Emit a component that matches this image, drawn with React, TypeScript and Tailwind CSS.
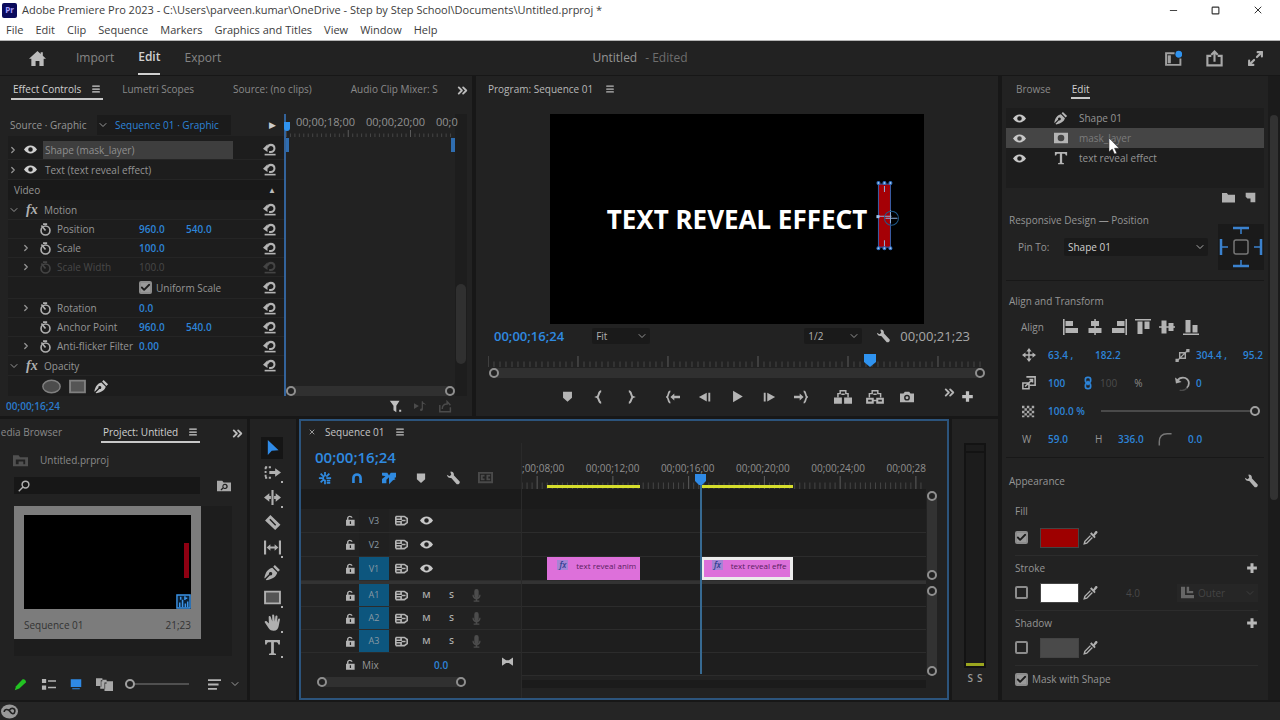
import type { ReactNode } from 'react';
import { ChevronDown, ChevronRight, ChevronsRight, Menu, Minus, Square, X, Check, Maximize2 } from 'lucide-react';

type IconName = keyof typeof icons;

const icons = {
  home: <path d="M8 1 0 8.2h2.2V15h4v-4.6h3.6V15h4V8.2H16L13 5.5V2h-2v1.7z" />,
  eye: (
    <path fillRule="evenodd" d="M0 8c2-3 4.8-4.8 8-4.8S14 5 16 8c-2 3-4.8 4.8-8 4.8S2 11 0 8zm8-2.800a2.800 2.800 0 1 0 0 5.600 2.800 2.800 0 0 0 0-5.600z" />
  ),
  reset: (
    <g>
      <path d="M0 7 5.500 1.500V11z" />
      <path d="M5 6.200C6 3.500 7.500 2.300 9.500 2.300c2.800 0 4.600 2 4.600 4.500S12 11 9.500 11H7.500" fill="none" stroke="currentColor" strokeWidth="2.500" />
      <path d="M2 13.300h13.500v2H2z" />
    </g>
  ),
  stopwatch: (
    <g fill="none" stroke="currentColor" strokeWidth="2">
      <circle cx="8" cy="9.200" r="5.500" />
      <path d="M5 1.400h5M3 3l5 6.200" />
    </g>
  ),
  pen: (
    <path fillRule="evenodd" d="M10.200 1 15 5.700l-1.800 1.700L8.700 2.700zM7.800 3.600l4.700 4.700c-1 3.600-4 5.700-10 7l-.8-.7 4-4a1.600 1.600 0 1 0-1-1l-4 4L.4 13C1.500 7.600 3.700 4.700 7.800 3.600z" />
  ),
  mask: <path fillRule="evenodd" d="M0 2h16v12H0zm8 2.200a3.800 3.800 0 1 0 0 7.600 3.800 3.800 0 0 0 0-7.600z" />,
  type: <path d="M1 1h14v4.200h-1.500c-.2-1.700-.8-2.200-2.500-2.200H9.300v9.500c0 1 .4 1.300 2 1.300V15H4.700v-1.200c1.600 0 2-.3 2-1.300V3H5c-1.700 0-2.300.5-2.500 2.200H1z" />,
  folder: <path d="M0 2.500h6l1.500 2H16V14H0z" />,
  sheet: <path d="M1 1h14v14H8V9.500H3.500L1 7z" />,
  wrench: <path d="M5.500.5c2.300 0 4 2 3.400 4.300l6.700 7.200c.8 2-1.500 4-3.300 3L6 8C3.600 8.500 1.300 6.800 1 4.300L4 6l2-1.800L5 1z" />,
  marker: <path d="M2.500 2h11v7.500L8 14.500 2.500 9.500z" />,
  braceOpen: <path d="M10.500 1.500C7 1.500 8.500 7 5.800 8c2.700 1 1.200 6.500 4.700 6.500" fill="none" stroke="currentColor" strokeWidth="2.300" />,
  braceClose: <path d="M5.500 1.500C9 1.500 7.500 7 10.200 8c-2.700 1-1.200 6.500-4.700 6.500" fill="none" stroke="currentColor" strokeWidth="2.300" />,
  goIn: (
    <g>
      <path d="M5 1.500C2 1.500 3.500 7 1 8c2.500 1 1 6.500 4 6.500" fill="none" stroke="currentColor" strokeWidth="2" />
      <path d="M5 8l4.500-4v2.600H16v2.800H9.500V12z" />
    </g>
  ),
  goOut: (
    <g>
      <path d="M11 1.500C14 1.500 12.500 7 15 8c-2.500 1-1 6.500-4 6.500" fill="none" stroke="currentColor" strokeWidth="2" />
      <path d="M11 8 6.500 4v2.600H0v2.800h6.500V12z" />
    </g>
  ),
  stepBack: <path d="M10 3v10L1 8zM11.800 3h2.200v10h-2.200z" />,
  stepForward: <path d="M6 3v10l9-5zM2 3h2.200v10H2z" />,
  play: <path d="M2.500 1v14L14.500 8z" />,
  camera: (
    <path fillRule="evenodd" d="M0 4h4l1.500-2h5L12 4h4v10H0zm8 1.500a3.300 3.300 0 1 0 0 6.600 3.300 3.300 0 0 0 0-6.600zm0 1.700a1.700 1.700 0 1 1 0 3.400 1.700 1.700 0 0 1 0-3.400z" />
  ),
  lift: (
    <g>
      <path d="M0 8.500h7V14H0zM9 8.500h7V14H9z" />
      <path d="M3.500 8.500V5h2V2.500h5V5h2v3.500M6.500 5.500h3" fill="none" stroke="currentColor" strokeWidth="1.300" />
    </g>
  ),
  extract: (
    <g fill="none" stroke="currentColor" strokeWidth="1.800">
      <path d="M1 9.500h5V13H1zM10 9.500h5V13h-5z" />
      <path d="M6 11.200h4M3 8.500V5h2.500V2.500h5V5H13v3.500M6.500 5.500h3" strokeWidth="1.300" />
    </g>
  ),
  plus: <path d="M6 1.500h4V6h4.500v4H10v4.500H6V10H1.500V6H6z" />,
  filter: <path d="M1 1h12L9 7v8l-3.500-2.500V7zM12.500 12h2.500v2.500h-2.500z" />,
  playNote: <path d="M0 4v7l6-3.500zM9.500 1.500h1.500c0 3 3.500 2 3.500 5-.8-1-1.800-1.300-3.500-1.500v6.500c0 2.500-3.500 2.800-3.500.8 0-1.300 1-1.800 2-1.800z" />,
  share: (
    <g fill="none" stroke="currentColor" strokeWidth="2">
      <path d="M5 5.500H1.300v9h13.400v-9H11M8 11V2M5 4.500 8 1.500l3 3" />
    </g>
  ),
  exportClip: <path d="M1 6v8.500h13V9M4 11c0-4 2-6 6-6V2l4 4.500" fill="none" stroke="currentColor" strokeWidth="1.800" />,
  workspace: (
    <g>
      <path d="M9 3H1v11h13.500V8" fill="none" stroke="currentColor" strokeWidth="1.800" />
      <path d="M2.500 5h3v7.500h-3z" />
      <circle cx="13" cy="4" r="3.200" fill="#2f93f0" />
    </g>
  ),
  arrow: <path d="M3 0v16l4.200-4.500L14.500 11z" />,
  trackSelect: (
    <g>
      <path d="M1 3h7M1 13h7M1.500 3v10" fill="none" stroke="currentColor" strokeWidth="1.800" strokeDasharray="2 1.500" />
      <path d="M5 6.500h5.500V4L16 8l-5.500 4V9.500H5z" />
    </g>
  ),
  ripple: <path d="M7 1h2v14H7zM0 8l5-4v2.600h1.500v2.800H5V12zM16 8l-5-4v2.600H9.500v2.800H11V12z" />,
  razor: <path fillRule="evenodd" d="M6 1 15.500 10 10.500 15 1 6zM5 5.500 10.500 11l1-1L6 4.500z" />,
  slip: <path d="M0 1.500h2v13H0zM14 1.500h2v13h-2zM2.500 8 6 5v2h4V5l3.500 3-3.500 3V9H6v2z" />,
  rectangle: <path d="M1 2.500h14v11H1z" fill="#555" stroke="currentColor" strokeWidth="1.800" />,
  ellipse: <ellipse cx="8" cy="8" rx="7.300" ry="5.300" fill="#4c4c4c" stroke="currentColor" strokeWidth="1.200" />,
  hand: (
    <path d="M4.600 9 2.500 6.800C1.300 6 .2 7 .8 8l3.800 5.600c1 1.400 2.500 2.100 4.400 2.100 3 0 4.300-1.600 4.800-4.200l1.200-6c.2-1.300-1.400-1.600-1.800-.4L12.300 8l.4-5.500c0-1.300-1.800-1.400-2-.1L10.200 7 9.600 1.400C9.400.1 7.700.2 7.700 1.500L7.800 7 6.300 2.600C5.900 1.400 4.200 1.900 4.400 3z" />
  ),
  lock: (
    <path fillRule="evenodd" d="M3 7V4.500C3 2.500 5 1 7 1s3.700 1 4 3H9C8.700 3.300 8 3 7 3S5 3.500 5 4.800V7h9v8.500H1.500V7zm4 2v4h1.800V9z" />
  ),
  sync: (
    <g fill="none" stroke="currentColor" strokeWidth="2">
      <path d="M1 3h6.500v3.500H1M1 13h6.500V9.500H1M1 3v10M8 3h3.500L15 5.500v5L11.500 13H8M8 8h5" />
    </g>
  ),
  mic: <path d="M8 0a2.700 2.700 0 0 1 2.700 2.700V8a2.700 2.700 0 0 1-5.400 0V2.700A2.700 2.700 0 0 1 8 0zM3 7h1.500c0 5 7 5 7 0H13c0 3-1.500 5-4 5.500V14h2.500v1.700h-7V14H7v-1.500C4.500 12 3 10 3 7z" />,
  nest: (
    <path d="M8 1v5M8 10v5M1 8h6M9.500 8H15M3 3l4 4M3 13l4-4M13 3 9.500 6.500M10 11h4M10 13.500h4" fill="none" stroke="currentColor" strokeWidth="2" />
  ),
  magnet: <path d="M1.500 14.500V8a6.500 6.500 0 0 1 13 0v6.500H11V8a3 3 0 0 0-6 0v6.500z" />,
  linked: <path d="M0 2h6l2 3 2-3h6v5l-2 1 1.500 1.500-3 1L8 15V7L5 10v4H0V9l4-3-4-1z" />,
  captions: (
    <g fill="none" stroke="currentColor" strokeWidth="2">
      <path d="M1 3h14v10H1zM7 6H4v4h3M13 6h-3v4h3" />
    </g>
  ),
  bowtie: <path d="M0 2l6 4h4l6-4v12l-6-4H6l-6 4z" />,
  binUp: <path fillRule="evenodd" d="M0 2.500h6l1.500 2H16V14H0zM3 7v5h3V9h5v3h2V7z" />,
  searchBin: (
    <path fillRule="evenodd" d="M0 2h6l1.500 2H16v10H0zM9 5.500a3 3 0 0 0-2.600 4.300L4 12l1 1 2.400-2.200A3 3 0 1 0 9 5.500zm0 1.300a1.700 1.700 0 1 1 0 3.400 1.700 1.700 0 0 1 0-3.400z" />
  ),
  search: (
    <g fill="none" stroke="currentColor" strokeWidth="2">
      <circle cx="10" cy="6" r="4.500" />
      <path d="M7 9l-6 6" />
    </g>
  ),
  pencil: <path d="M1 15l1.500-5L10 2c1.800-1.500 5.500 1 4.500 3.500L6.500 13z" />,
  listView: <path d="M1 2h4.500v4.500H1zM1 9h4.500v4.500H1zM7.500 3.500H16V5H7.500zM7.500 10.500H16V12H7.500z" />,
  iconView: <path d="M1 1.500h14v10.500H1zM3 13.500h10V15H3z" />,
  freeform: (
    <path fillRule="evenodd" d="M0 2h6v1.500h4V5h6v9H8v-2H4V9.500H0zM4.500 4v6H5V5h1V4zM8 6v6h.6V7H10V6z" />
  ),
  sort: <path d="M0 1.500h16v2.200H0zM0 6.900h13v2.200H0zM0 12.300h11v2.200H0z" />,
  alignLeft: <path d="M0 0h1.600v16H0zM2.500 2H10v5H2.500zM2.500 9H15v5H2.500z" />,
  alignCenter: <path d="M7.300 0h1.500v16H7.300zM4 2h8v5H4zM1.500 9h13v5h-13z" />,
  alignRight: <path d="M14.400 0H16v16h-1.600zM6 2h7.500v5H6zM1 9h12.500v5H1z" />,
  alignTop: <path d="M0 0h16v1.600H0zM2.500 2.500h5V15h-5zM9.500 2.500h5V10h-5z" />,
  alignMiddle: <path d="M0 7.300h16v1.500H0zM2.500 1.500h5v13h-5zM9.500 4h5v8h-5z" />,
  alignBottom: <path d="M0 14.400h16V16H0zM2.500 1h5v12.500h-5zM9.500 6h5v7.500h-5z" />,
  position: (
    <g>
      <path d="M7.200 3h1.600v10H7.200zM3 7.200h10v1.600H3z" />
      <path d="M8 0l3 4H5zM8 16l3-4H5zM0 8l4-3v6zM16 8l-4-3v6z" />
    </g>
  ),
  anchor: (
    <g>
      <path d="M2 14 14 2M5 5h6v6H5z" fill="none" stroke="currentColor" strokeWidth="1.500" />
      <path d="M12 1h3.500v3.500H12zM.5 11.500H4V15H.5z" />
    </g>
  ),
  scale: (
    <g fill="none" stroke="currentColor" strokeWidth="1.800">
      <path d="M5 1h10v9.500H9M1 8h7v6.500H1zM3.500 12 12 4M8.500 4H12v3.500" />
    </g>
  ),
  link: (
    <g fill="none" stroke="currentColor" strokeWidth="2">
      <rect x="5" y="1.500" width="6" height="6" rx="2.500" />
      <rect x="5" y="8.500" width="6" height="6" rx="2.500" />
      <path d="M8 5.500v5" />
    </g>
  ),
  rotate: (
    <g>
      <path d="M2.500 5C4 2.500 6 1.800 8.500 1.800c4 0 6.300 3 6.300 6 0 2-1 4-2.500 5" fill="none" stroke="currentColor" strokeWidth="1.900" />
      <path d="M5 15c3 1 6 0 8-2.500" fill="none" stroke="#4a4a4a" strokeWidth="1.500" />
      <path d="M0 1.500 1 8l6-1.500z" />
    </g>
  ),
  opacity: (
    <path d="M0 1h3v3H0zM6 1h3v3H6zM12 1h3v3h-3zM3 4h3v3H3zM9 4h3v3H9zM0 7h3v3H0zM6 7h3v3H6zM12 7h3v3h-3zM3 10h3v3H3zM9 10h3v3H9zM0 13h3v2H0zM6 13h3v2H6zM12 13h3v2h-3z" />
  ),
  corner: <path d="M1.500 15.500V11c0-6 3-9 9-9h5" fill="none" stroke="currentColor" strokeWidth="1.700" />,
  dropper: (
    <g>
      <path d="M9 2.500 11 4.500 13 1.500c1.500-1.500 3.500.5 2 2L12.500 6l1 1.500-1.300 1.300L7.500 4z" />
      <path d="M8 6 2 12l-.7 2.700L4 14l6-6" fill="none" stroke="currentColor" strokeWidth="1.500" />
    </g>
  ),
  strokeEdge: <path d="M0 1h5v10h11v4H0zM7 1h3v5h5v3H7z" />,
  cloud: (
    <g>
      <ellipse cx="8" cy="8" rx="8" ry="6.500" />
      <path d="M3 8.500c0-3 4-3 5.500-.5s4 3 4.500 0-3-4-5-1.500" fill="none" stroke="#222" strokeWidth="1.500" />
    </g>
  ),
  sequence: (
    <g>
      <path d="M1 1h14v14H1z" fill="#0b2238" stroke="#3b94e8" strokeWidth="1.500" />
      <path d="M4 14V9M7 14V6M10 14v-4M12.500 14V8M5 3v3M9.500 2.500v4M12 4.500H9" fill="none" stroke="#3b94e8" strokeWidth="1.600" />
    </g>
  ),
};

function Icon({ name, className = 'size-3 text-[#b8b8b8]' }: { name: IconName; className?: string }) {
  return (
    <svg viewBox="0 0 16 16" fill="currentColor" aria-hidden="true" className={`shrink-0 ${className}`}>
      {icons[name]}
    </svg>
  );
}

function IconButton({ name, label, className = '', iconClass }: { name: IconName; label: string; className?: string; iconClass?: string }) {
  return (
    <button type="button" aria-label={label} className={`flex items-center justify-center ${className}`}>
      <Icon name={name} className={iconClass} />
    </button>
  );
}

function CheckBox({ id, checked = false, label }: { id: string; checked?: boolean; label?: string }) {
  return (
    <span className="relative flex size-[13px] shrink-0 items-center justify-center">
      <input
        id={id}
        type="checkbox"
        defaultChecked={checked}
        aria-label={label}
        className="peer size-full appearance-none rounded-xs border-2 border-[#8c8c8c] checked:bg-[#9a9a9a]"
      />
      <Check className="pointer-events-none absolute hidden size-[11px] text-[#1c1c1c] peer-checked:block" strokeWidth={4} />
    </span>
  );
}

function Dropdown({ id, value, label, className }: { id: string; value: string; label?: string; className: string }) {
  return (
    <span className={`relative flex items-center rounded-xs bg-[#1a1a1a] ${className}`}>
      <select id={id} aria-label={label} defaultValue={value} className="size-full appearance-none bg-transparent pl-1 outline-none">
        <option>{value}</option>
      </select>
      <ChevronDown className="pointer-events-none absolute right-0.5 size-3 opacity-80" />
    </span>
  );
}

function Ring() {
  return <span className="size-[10px] shrink-0 rounded-full border-2 border-[#8f8f8f] bg-[#222]" />;
}

/* Horizontal zoom bar with a round handle at each end */
function ZoomBar({ className = '' }: { className?: string }) {
  return (
    <div className={`flex items-center justify-between rounded-full bg-[#303030] ${className}`}>
      <Ring />
      <Ring />
    </div>
  );
}

function Ticks({ count, every, offset = 0, className }: { count: number; every: number; offset?: number; className: string }) {
  const marks = Array.from({ length: count }, (_, i) => i);
  return (
    <svg className={className} aria-hidden="true">
      {marks.map((i) => {
        const x = `${((i / count) * 100).toFixed(2)}%`;
        const major = (i - offset) % every === 0;
        return <line key={i} x1={x} x2={x} y1={major ? '0' : '50%'} y2="100%" stroke={major ? '#5c5c5c' : '#454545'} strokeWidth="1" />;
      })}
    </svg>
  );
}

function Tab({ children, active = false, className = '' }: { children: ReactNode; active?: boolean; className?: string }) {
  return (
    <button
      type="button"
      className={`flex items-center whitespace-nowrap border-b-2 pt-1 ${active ? 'border-[#c8c8c8] font-medium text-[#d0d0d0]' : 'border-transparent text-[#8a8a8a]'} ${className}`}
    >
      {children}
    </button>
  );
}

const menuItems = ['File', 'Edit', 'Clip', 'Sequence', 'Markers', 'Graphics and Titles', 'View', 'Window', 'Help'];

function TitleBar() {
  return (
    <header className="border-b border-[#b5b5b5] bg-white text-[11px] text-[#3c3c3c]">
      <div className="flex h-5 items-center pl-0.5">
        <span className="flex size-[15px] items-center justify-center rounded-xs bg-[#0b0b5c] text-[8px] font-bold text-[#a9a3ff]">Pr</span>
        <h1 className="pl-[5px]">Adobe Premiere Pro 2023 - C:\Users\parveen.kumar\OneDrive - Step by Step School\Documents\Untitled.prproj *</h1>
        <div className="ml-auto flex items-center gap-8 pr-4 text-[#333]">
          <button type="button" aria-label="Minimize"><Minus className="size-[11px]" /></button>
          <button type="button" aria-label="Restore"><Square className="size-[9px]" strokeWidth={3} /></button>
          <button type="button" aria-label="Close"><X className="size-[12px]" /></button>
        </div>
      </div>
      <nav className="flex h-5 items-center gap-3 pl-1.5">
        {menuItems.map((item) => (
          <button key={item} type="button">{item}</button>
        ))}
      </nav>
    </header>
  );
}

function WorkspaceBar() {
  return (
    <div className="grid h-[34px] grid-cols-[1fr_auto_1fr] items-stretch bg-[#222] text-[12px] text-[#858585]">
      <div className="flex items-stretch pl-[29px]">
        <IconButton name="home" label="Home" iconClass="size-[17px] text-[#bcbcbc]" />
        <button type="button" className="ml-[30px]">Import</button>
        <button type="button" className="ml-6 border-b-2 border-[#cfcfcf] font-semibold text-[#d0d0d0]">Edit</button>
        <button type="button" className="ml-6">Export</button>
      </div>
      <p className="flex items-center gap-2">
        <span className="text-[#969696]">Untitled</span>
        <span className="text-[#6e6e6e]">- Edited</span>
      </p>
      <div className="flex items-center justify-end gap-6 pr-4">
        <IconButton name="workspace" label="Workspaces" iconClass="size-[17px] text-[#a0a0a0]" />
        <IconButton name="share" label="Quick export" iconClass="size-[17px] text-[#a8a8a8]" />
        <button type="button" aria-label="Full screen"><Maximize2 className="size-[17px] text-[#b0b0b0]" strokeWidth={3} /></button>
      </div>
    </div>
  );
}

interface Property {
  name: string;
  values: string[];
  expandable?: boolean;
  disabled?: boolean;
}

const motionBefore: Property[] = [
  { name: 'Position', values: ['960.0', '540.0'] },
  { name: 'Scale', values: ['100.0'], expandable: true },
  { name: 'Scale Width', values: ['100.0'], expandable: true, disabled: true },
];

const motionAfter: Property[] = [
  { name: 'Rotation', values: ['0.0'], expandable: true },
  { name: 'Anchor Point', values: ['960.0', '540.0'] },
  { name: 'Anti-flicker Filter', values: ['0.00'], expandable: true },
];

function ResetButton({ dim = false }: { dim?: boolean }) {
  return <IconButton name="reset" label="Reset" className="ml-auto" iconClass={dim ? 'size-[13px] text-[#444]' : 'size-[13px] text-[#b4b4b4]'} />;
}

function PropertyRow({ property }: { property: Property }) {
  const { name, values, expandable, disabled } = property;
  return (
    <div className="flex h-[19px] items-center border-b border-[#252525] pr-2">
      <span className="flex w-[31px] justify-end pr-2">{expandable && <ChevronRight className="size-[10px]" strokeWidth={3} />}</span>
      <Icon name="stopwatch" className={disabled ? 'size-[13px] text-[#444]' : 'size-[13px] text-[#b0b0b0]'} />
      <span className={`w-[87px] whitespace-nowrap pl-[5px] ${disabled ? 'text-[#484848]' : ''}`}>{name}</span>
      {values.map((value, i) => (
        <button key={i} type="button" className={`w-[47px] text-left ${disabled ? 'text-[#484848]' : 'font-semibold text-[#2d84d8]'}`}>
          {value}
        </button>
      ))}
      <ResetButton dim={disabled} />
    </div>
  );
}

function EffectControls() {
  return (
    <section className="flex min-w-0 flex-[464] flex-col bg-[#222] pl-2" aria-label="Effect Controls">
      <div className="mb-0.5 flex h-6 items-stretch">
        <Tab active className="ml-[3px] px-0.5">
          Effect Controls <Menu className="ml-2.5 size-[10px]" strokeWidth={3} />
        </Tab>
        <Tab className="ml-[19px]">Lumetri Scopes</Tab>
        <Tab className="ml-[39px]">Source: (no clips)</Tab>
        <Tab className="ml-[39px]">Audio Clip Mixer: S</Tab>
        <button type="button" aria-label="More panels" className="ml-auto pr-0.5 pt-1"><ChevronsRight className="size-[15px] text-[#bbb]" strokeWidth={3} /></button>
      </div>
      <div className="flex flex-1 pt-3">
        <div className="flex w-[276px] shrink-0 flex-col">
          <div className="flex h-[22px] items-center pl-0.5">
            <span className="w-[87px]">Source · Graphic</span>
            <button type="button" className="flex h-5 w-[134px] items-center gap-1.5 bg-[#1b1b1b] text-[#2d84d8]">
              <ChevronDown className="size-3 shrink-0 text-[#999]" />
              <span className="whitespace-nowrap">Sequence 01 · Graphic</span>
            </button>
            <span className="ml-auto pr-2 text-[9px] text-[#ccc]">▶</span>
          </div>
          <div className="flex-1 bg-[#1d1d1d] pt-1">
            <div className="flex h-5 items-center border-b border-[#252525] pr-2">
              <ChevronRight className="size-[10px]" strokeWidth={3} />
              <IconButton name="eye" label="Toggle shape" className="mx-1.5" iconClass="size-[13px] text-[#d0d0d0]" />
              <span className="flex h-[18px] w-[190px] items-center bg-[#3e3e3e] pl-0.5 text-[#8f8f8f]">Shape (mask_layer)</span>
              <ResetButton />
            </div>
            <div className="flex h-5 items-center border-b border-[#252525] pr-2">
              <ChevronRight className="size-[10px]" strokeWidth={3} />
              <IconButton name="eye" label="Toggle text" className="mx-1.5" iconClass="size-[13px] text-[#d0d0d0]" />
              <span className="pl-0.5">Text (text reveal effect)</span>
              <ResetButton />
            </div>
            <div className="flex h-5 items-center justify-between bg-[#191919] pl-1.5 pr-2">
              <span>Video</span>
              <span className="text-[8px] text-[#bbb]">▲</span>
            </div>
            <div className="flex h-5 items-center border-b border-[#252525] pr-2">
              <ChevronDown className="size-3" strokeWidth={2} />
              <span className="w-6 pl-1.5 font-['Liberation_Serif',serif] text-[14px] font-bold italic text-[#b0b0b0]">fx</span>
              <span>Motion</span>
              <ResetButton />
            </div>
            {motionBefore.map((property) => <PropertyRow key={property.name} property={property} />)}
            <div className="flex h-[22px] items-center border-b border-[#252525] pl-[131px] pr-2">
              <CheckBox id="uniform-scale" checked />
              <label htmlFor="uniform-scale" className="pl-1">Uniform Scale</label>
              <ResetButton />
            </div>
            {motionAfter.map((property) => <PropertyRow key={property.name} property={property} />)}
            <div className="flex h-5 items-center border-b border-[#252525] pr-2">
              <ChevronDown className="size-3" strokeWidth={2} />
              <span className="w-6 pl-1.5 font-['Liberation_Serif',serif] text-[14px] font-bold italic text-[#b0b0b0]">fx</span>
              <span>Opacity</span>
              <ResetButton />
            </div>
            <div className="flex h-5 items-center gap-2 pl-[34px]">
              <IconButton name="ellipse" label="Ellipse mask" iconClass="size-[19px] text-[#808080]" />
              <IconButton name="rectangle" label="Rectangle mask" iconClass="size-[17px] text-[#808080]" />
              <IconButton name="pen" label="Pen mask" iconClass="size-[15px] text-[#c4c4c4]" />
            </div>
          </div>
        </div>
        <div className="relative flex min-w-0 flex-1 flex-col border-l-2 border-[#33639b]">
          <span className="absolute -left-0.5 top-2 h-[9px] w-[6px] rounded-b-sm bg-[#2f93f0]" />
          <div className="flex h-4 items-center gap-[11px] whitespace-nowrap pl-2.5 text-[11px] text-[#929292]">
            <span>00;00;18;00</span>
            <span>00;00;20;00</span>
            <span>00;0</span>
          </div>
          <Ticks count={38} every={14} className="h-[7px] w-full" />
          <div className="flex justify-between pt-px">
            <span className="h-[14px] w-[3px] bg-[#2f6db0]" />
            <span className="h-[14px] w-[4px] bg-[#2f6db0]" />
          </div>
          <ZoomBar className="mt-auto h-[10px]" />
        </div>
        <div className="mr-[5px] flex w-3 flex-col justify-end bg-[#1d1d1d] pb-8">
          <span className="h-20 w-[10px] self-center rounded-full bg-[#303030]" />
        </div>
      </div>
      <div className="flex h-[20px] items-center text-[#aaa]">
        <span className="-ml-0.5 font-semibold text-[#2b7bcc]">00;00;16;24</span>
        <div className="ml-auto flex items-center gap-3 pr-5">
          <IconButton name="filter" label="Filter properties" iconClass="size-[13px] text-[#c0c0c0]" />
          <IconButton name="playNote" label="Play audio" iconClass="size-[13px] text-[#4b4b4b]" />
          <IconButton name="exportClip" label="Loop playback" iconClass="size-[13px] text-[#4b4b4b]" />
        </div>
      </div>
    </section>
  );
}

const transportGroups: { name: IconName; label: string; size: string }[][] = [
  [
    { name: 'marker', label: 'Add marker', size: 'size-[13px]' },
    { name: 'braceOpen', label: 'Mark in', size: 'size-[14px]' },
    { name: 'braceClose', label: 'Mark out', size: 'size-[14px]' },
  ],
  [
    { name: 'goIn', label: 'Go to in', size: 'size-[14px]' },
    { name: 'stepBack', label: 'Step back', size: 'size-[14px]' },
    { name: 'play', label: 'Play', size: 'size-[13px]' },
    { name: 'stepForward', label: 'Step forward', size: 'size-[14px]' },
    { name: 'goOut', label: 'Go to out', size: 'size-[14px]' },
  ],
  [
    { name: 'lift', label: 'Lift', size: 'size-[18px]' },
    { name: 'extract', label: 'Extract', size: 'size-[18px]' },
    { name: 'camera', label: 'Export frame', size: 'size-[14px]' },
  ],
];

function ProgramMonitor() {
  return (
    <section className="flex min-w-0 flex-[498] flex-col bg-[#222] px-3" aria-label="Program">
      <div className="flex h-[26px] items-center gap-3 font-medium text-[#b8b8b8]">
        Program: Sequence 01
        <Menu className="size-[10px]" strokeWidth={3} />
      </div>
      <div className="relative mx-auto mt-3 flex aspect-[373/210] w-[75%] items-center justify-center bg-black">
        <p className="whitespace-nowrap font-['Noto_Sans','Open_Sans',sans-serif] text-[26px] font-bold leading-none text-white">TEXT REVEAL EFFECT</p>
        <svg viewBox="0 0 373 210" className="absolute inset-0 size-full" aria-hidden="true">
          <rect x="328" y="70" width="12" height="63" fill="#a50005" stroke="#3a5fa8" />
          <path d="M334 72v6M334 126v6M327 102h14M340 96v13M335 104h12" stroke="#8fb0dc" strokeWidth="1" fill="none" />
          <circle cx="341" cy="104" r="7" fill="none" stroke="#1f5a8c" />
          {[69, 134].map((y) =>
            [328, 334, 340].map((x) => <circle key={`${x}-${y}`} cx={x} cy={y} r="1.500" fill="#9cc4f0" stroke="#2c6cc0" />),
          )}
          <rect x="326" y="101" width="3" height="3" fill="#9cc4f0" />
        </svg>
      </div>
      <div className="flex h-6 items-center pl-1.5 pr-4 text-[#b0b0b0]">
        <span className="text-[13px] font-semibold text-[#2f8ae0]">00;00;16;24</span>
        <Dropdown id="zoom-level" label="Zoom level" value="Fit" className="ml-7 h-4 w-[58px]" />
        <Dropdown id="resolution" label="Playback resolution" value="1/2" className="ml-auto h-4 w-[58px]" />
        <IconButton name="wrench" label="Settings" className="ml-3.5" iconClass="size-[14px] text-[#b8b8b8]" />
        <span className="ml-2.5 text-[13px] text-[#a8a8a8]">00;00;21;23</span>
      </div>
      <div className="relative pt-2">
        <Ticks count={83} every={15} className="h-[11px] w-full" />
        <svg viewBox="0 0 16 16" className="absolute left-[75%] top-1 size-4 fill-[#2f93f0]" aria-hidden="true">
          <path d="M2 2h12v8l-6 5-6-5z" />
        </svg>
      </div>
      <ZoomBar className="mx-px mt-px h-[10px]" />
      <div className="grid flex-1 grid-cols-[1fr_auto_1fr] items-center pb-px">
        <span />
        <div className="flex gap-2.5">
          {transportGroups.map((group, i) => (
            <div key={i} className="flex">
              {group.map((item) => (
                <IconButton key={item.name} name={item.name} label={item.label} className="w-8" iconClass={`${item.size} text-[#b4b4b4]`} />
              ))}
            </div>
          ))}
        </div>
        <div className="flex items-center justify-end gap-1 pr-3">
          <button type="button" aria-label="More buttons" className="pb-2"><ChevronsRight className="size-[15px] text-[#b4b4b4]" strokeWidth={3} /></button>
          <IconButton name="plus" label="Button editor" iconClass="size-[13px] text-[#c0c0c0]" />
        </div>
      </div>
    </section>
  );
}

function ProjectPanel() {
  return (
    <section className="flex w-[247px] shrink-0 flex-col bg-[#222]" aria-label="Project">
      <div className="flex h-6 items-stretch">
        <Tab className="w-[62px] justify-end">edia Browser</Tab>
        <Tab active className="ml-[39px] px-0.5">
          Project: Untitled <Menu className="ml-2.5 size-[10px]" strokeWidth={3} />
        </Tab>
        <button type="button" aria-label="More panels" className="ml-auto pr-0.5 pt-1"><ChevronsRight className="size-[15px] text-[#bbb]" strokeWidth={3} /></button>
      </div>
      <div className="flex h-[34px] items-center gap-3 pl-[13px] text-[#8a8a8a]">
        <Icon name="binUp" className="size-[15px] text-[#505050]" />
        Untitled.prproj
      </div>
      <div className="flex items-center justify-between pl-[14px] pr-4">
        <div className="flex h-[17px] w-[186px] items-center bg-[#171717] pl-1">
          <Icon name="search" className="size-3 text-[#b0b0b0]" />
          <input type="search" aria-label="Search project" className="h-full min-w-0 flex-1 bg-transparent px-1 outline-none" />
        </div>
        <IconButton name="searchBin" label="New search bin" iconClass="size-[14px] text-[#a8a8a8]" />
      </div>
      <div className="ml-[14px] mr-[15px] mt-3 flex-1 bg-[#1d1d1d]">
        <figure className="w-[187px] bg-[#7c7c7c] px-2.5 pb-1.5 pt-[9px]">
          <div className="relative aspect-video bg-black">
            <span className="absolute right-0.5 top-[30%] h-[37%] w-[5px] bg-[#8e0012]" />
            <Icon name="sequence" className="absolute bottom-0 right-0 size-[15px]" />
          </div>
          <figcaption className="flex h-[24px] items-end justify-between text-[#333]">
            <span>Sequence 01</span>
            <span>21;23</span>
          </figcaption>
        </figure>
      </div>
      <div className="mt-3 flex h-8 items-center pl-[14px] pr-1.5">
        <IconButton name="pencil" label="Writable" iconClass="size-[13px] text-[#22c322]" />
        <IconButton name="listView" label="List view" className="ml-3.5" iconClass="size-[15px] text-[#b4b4b4]" />
        <IconButton name="iconView" label="Icon view" className="ml-3.5" iconClass="size-[12px] text-[#2f8ae6]" />
        <IconButton name="freeform" label="Freeform view" className="ml-3.5" iconClass="size-[17px] text-[#a8a8a8]" />
        <input
          type="range"
          aria-label="Thumbnail size"
          defaultValue={0}
          className="ml-3 h-3 w-16 appearance-none bg-[linear-gradient(#505050,#505050)] bg-[length:100%_2px] bg-center bg-no-repeat [&::-webkit-slider-thumb]:size-[10px] [&::-webkit-slider-thumb]:appearance-none [&::-webkit-slider-thumb]:rounded-full [&::-webkit-slider-thumb]:border-2 [&::-webkit-slider-thumb]:border-[#a0a0a0] [&::-webkit-slider-thumb]:bg-[#222]"
        />
        <IconButton name="sort" label="Sort icons" className="ml-auto" iconClass="size-[13px] text-[#b4b4b4]" />
        <ChevronDown className="ml-2 size-3 text-[#999]" />
      </div>
    </section>
  );
}

const tools: { name: IconName; label: string; more?: boolean }[] = [
  { name: 'arrow', label: 'Selection' },
  { name: 'trackSelect', label: 'Track select', more: true },
  { name: 'ripple', label: 'Ripple edit', more: true },
  { name: 'razor', label: 'Razor' },
  { name: 'slip', label: 'Slip', more: true },
  { name: 'pen', label: 'Pen' },
  { name: 'rectangle', label: 'Rectangle', more: true },
  { name: 'hand', label: 'Hand', more: true },
  { name: 'type', label: 'Type', more: true },
];

function ToolsPanel() {
  return (
    <section className="flex w-[46px] shrink-0 flex-col items-center bg-[#222] pr-0.5 pt-4" aria-label="Tools">
      {tools.map((tool, i) => (
        <div key={tool.name} className="relative flex h-[25px] items-center">
          <IconButton
            name={tool.name}
            label={tool.label}
            className={`size-[22px] ${i === 0 ? 'bg-[#151515]' : ''}`}
            iconClass={i === 0 ? 'size-[15px] text-[#2f8ae6]' : 'size-[17px] text-[#b0b0b0]'}
          />
          {tool.more && <span className="absolute bottom-0.5 right-0 size-0.5 bg-[#b0b0b0]" />}
        </div>
      ))}
    </section>
  );
}

interface Clip {
  name: string;
  start: number;
  length: number;
  selected?: boolean;
}

interface Track {
  id: string;
  targeted: boolean;
  clips?: Clip[];
}

const clips: Clip[] = [
  { name: 'text reveal anim', start: 6.3, length: 23 },
  { name: 'text reveal effe', start: 44.3, length: 22.8, selected: true },
];

const videoTracks: Track[] = [
  { id: 'V3', targeted: false },
  { id: 'V2', targeted: false },
  { id: 'V1', targeted: true, clips },
];

const audioTracks: Track[] = [
  { id: 'A1', targeted: true },
  { id: 'A2', targeted: true },
  { id: 'A3', targeted: true },
];

const rulerLabels = [';00;08;00', '00;00;12;00', '00;00;16;00', '00;00;20;00', '00;00;24;00', '00;00;28'];

function TrackHead({ track, audio = false }: { track: Track; audio?: boolean }) {
  return (
    <div className={`flex items-center border-b border-[#2c2c2c] pl-11 ${audio ? 'h-[23px]' : 'h-6'}`}>
      <IconButton name="lock" label={`Lock ${track.id}`} iconClass="size-[11px] text-[#b4b4b4]" />
      <span className={`ml-[3px] flex h-full w-[30px] items-center justify-center text-[9px] text-[#8a9aa4] ${track.targeted ? 'bg-[#0d567e]' : 'bg-[#202020]'}`}>
        {track.id}
      </span>
      <IconButton name="sync" label={`Sync lock ${track.id}`} className="w-[25px]" iconClass="size-[13px] text-[#b4b4b4]" />
      {audio ? (
        <>
          <button type="button" aria-label={`Mute ${track.id}`} className="w-[25px] text-[9px] font-semibold text-[#b0b0b0]">M</button>
          <button type="button" aria-label={`Solo ${track.id}`} className="w-[25px] text-[9px] font-semibold text-[#b0b0b0]">S</button>
          <IconButton name="mic" label={`Record ${track.id}`} className="w-[25px]" iconClass="size-[13px] text-[#4c4c4c]" />
        </>
      ) : (
        <IconButton name="eye" label={`Toggle ${track.id}`} className="w-[25px]" iconClass="size-[13px] text-[#c8c8c8]" />
      )}
    </div>
  );
}

function TrackLane({ track, audio = false }: { track: Track; audio?: boolean }) {
  return (
    <div className={`relative border-b border-[#2c2c2c] ${audio ? 'h-[23px]' : 'h-6'}`}>
      {track.clips?.map((clip) => (
        <div
          key={clip.name}
          style={{ left: `${clip.start}%`, width: `${clip.length}%` }}
          className={`absolute inset-y-0 flex items-start whitespace-nowrap bg-[#dd70da] text-[8px] leading-3 text-[#5a2060] ${clip.selected ? 'border-[3px] border-[#ececec] pl-2' : 'pl-2.5 pt-[3px]'}`}
        >
          <span className="mr-2 bg-[#a584d4] px-0.5 font-semibold italic leading-[10px] text-[#2f3f90]">fx</span>
          <span>{clip.name}</span>
        </div>
      ))}
    </div>
  );
}

function VerticalZoom({ className }: { className: string }) {
  return (
    <div className={`flex w-[10px] flex-col items-center justify-between rounded-full bg-[#323232] ${className}`}>
      <Ring />
      <Ring />
    </div>
  );
}

function Timeline() {
  return (
    <section className="flex min-w-0 flex-1 flex-col border-2 border-[#2c547c] bg-[#222]" aria-label="Timeline">
      <div className="flex h-[22px] items-center pl-[7px] text-[#c4c4c4]">
        <button type="button" aria-label="Close sequence"><X className="size-2 text-[#999]" strokeWidth={3} /></button>
        <span className="pl-[9px] font-medium">Sequence 01</span>
        <Menu className="ml-2.5 size-[10px]" strokeWidth={3} />
      </div>
      <div className="flex flex-1">
        <div className="flex w-[221px] shrink-0 flex-col border-r border-[#2a2a2a]">
          <div className="flex h-[46px] flex-col justify-between pb-1">
            <p className="pl-[14px] pt-1 text-[15px] font-semibold leading-5 text-[#2f8ae0]">00;00;16;24</p>
            <div className="flex items-center pl-2">
              <IconButton name="nest" label="Insert as nest" className="w-8" iconClass="size-[14px] text-[#2f8ae0]" />
              <IconButton name="magnet" label="Snap" className="w-8" iconClass="size-[12px] text-[#2f8ae0]" />
              <IconButton name="linked" label="Linked selection" className="w-8" iconClass="size-[14px] text-[#2f8ae0]" />
              <IconButton name="marker" label="Add marker" className="w-8" iconClass="size-[12px] text-[#b8b8b8]" />
              <IconButton name="wrench" label="Timeline settings" className="w-8" iconClass="size-[14px] text-[#b8b8b8]" />
              <IconButton name="captions" label="Captions" className="w-8" iconClass="size-[15px] text-[#4a4a4a]" />
            </div>
          </div>
          <div className="h-5 bg-[#1b1b1b]" />
          {videoTracks.map((track) => <TrackHead key={track.id} track={track} />)}
          <div className="h-[3px] bg-[#333]" />
          {audioTracks.map((track) => <TrackHead key={track.id} track={track} audio />)}
          <div className="flex h-[23px] items-center pl-11">
            <IconButton name="lock" label="Lock mix" iconClass="size-[11px] text-[#b4b4b4]" />
            <span className="ml-[6px] w-[72px]">Mix</span>
            <span className="font-semibold text-[#2d84d8]">0.0</span>
            <IconButton name="bowtie" label="Keyframes" className="ml-auto pb-1.5 pr-2" iconClass="size-[11px] text-[#b8b8b8]" />
          </div>
          <ZoomBar className="ml-4 mt-px h-[10px] w-[149px]" />
        </div>
        <div className="flex min-w-0 flex-1 flex-col">
          <div className="relative flex-1">
            <div className="flex h-[46px] flex-col justify-end">
              <div className="flex justify-between whitespace-nowrap leading-4 text-[#909090]">
                {rulerLabels.map((label) => <span key={label}>{label}</span>)}
              </div>
              <Ticks count={80} every={15} offset={3} className="h-[13px] w-full" />
            </div>
            {clips.map((clip) => (
              <span
                key={clip.name}
                style={{ left: `${clip.start}%`, width: `${clip.length}%` }}
                className="absolute top-[42px] h-[3px] bg-[#d6de2c]"
              />
            ))}
            <div className="bg-[#1e1e1e]">
              <div className="h-5 bg-[#1b1b1b]" />
              {videoTracks.map((track) => <TrackLane key={track.id} track={track} />)}
              <div className="h-[3px] bg-[#333]" />
              {audioTracks.map((track) => <TrackLane key={track.id} track={track} audio />)}
              <div className="h-[23px] border-b border-[#2c2c2c]" />
            </div>
            <div className="absolute bottom-6 left-[44%] top-[31px] flex w-[10px] -translate-x-1 flex-col items-center">
              <svg viewBox="0 0 11 11" className="w-[11px] shrink-0 fill-[#2f8ae6]" aria-hidden="true">
                <path d="M0 0h11v7l-4 4H4L0 7z" />
              </svg>
              <span className="w-0.5 flex-1 bg-[#376a92]" />
            </div>
            <div className="mt-1 h-2 bg-[#1b1b1b]" />
          </div>
        </div>
        <div className="flex w-[21px] flex-col pl-px pt-12">
          <VerticalZoom className="h-[89px]" />
          <VerticalZoom className="mt-1.5 h-[90px]" />
        </div>
      </div>
    </section>
  );
}

function AudioMeter() {
  return (
    <section className="flex w-[46px] shrink-0 flex-col items-center bg-[#222] pb-3 pt-6" aria-label="Audio meters">
      <div className="flex w-[22px] flex-1 flex-col justify-between border-2 border-[#131313] bg-[#1c1c1c]">
        <span className="h-2 border-b-2 border-[#131313]" />
        <span className="h-[3px] bg-[#9ba61f]" />
      </div>
      <div className="flex h-5 items-center gap-1 text-[10px] font-semibold text-[#999]">
        <button type="button" aria-label="Solo left">S</button>
        <button type="button" aria-label="Solo right">S</button>
      </div>
    </section>
  );
}

const layers: { name: string; icon: IconName; selected?: boolean }[] = [
  { name: 'Shape 01', icon: 'pen' },
  { name: 'mask_layer', icon: 'mask', selected: true },
  { name: 'text reveal effect', icon: 'type' },
];

const alignments: { name: IconName; label: string }[] = [
  { name: 'alignLeft', label: 'Align left' },
  { name: 'alignCenter', label: 'Align centre' },
  { name: 'alignRight', label: 'Align right' },
  { name: 'alignTop', label: 'Align top' },
  { name: 'alignMiddle', label: 'Align middle' },
  { name: 'alignBottom', label: 'Align bottom' },
];

const blue = 'font-semibold text-[#2d84d8]';

function PaintRow({ id, label, swatch, checked, children }: { id: string; label: string; swatch: string; checked?: boolean; children?: ReactNode }) {
  return (
    <div className="flex h-[31px] items-center pb-1">
      <CheckBox id={id} label={label} checked={checked} />
      <button type="button" aria-label={`${label} colour`} className={`ml-3 h-5 w-[39px] border border-[#444] ${swatch}`} />
      <IconButton name="dropper" label={`${label} eyedropper`} className="ml-1" iconClass="size-[15px] text-[#b0b0b0]" />
      {children}
    </div>
  );
}

function EssentialGraphics() {
  return (
    <aside className="flex w-[278px] shrink-0 bg-[#222]" aria-label="Essential Graphics">
      <div className="flex min-w-0 flex-1 flex-col pl-1 pr-1">
        <div className="mb-px flex h-[23px] items-stretch pl-2">
          <Tab className="px-0.5">Browse</Tab>
          <Tab active className="ml-[18px] px-px">Edit</Tab>
        </div>
        <ul className="mt-2 h-20 bg-[#1d1d1d]">
          {layers.map((layer) => (
            <li key={layer.name} className={`flex h-5 items-center pl-[7px] ${layer.selected ? 'bg-[#454545]' : ''}`}>
              <IconButton name="eye" label={`Toggle ${layer.name}`} iconClass="size-[13px] text-[#c8c8c8]" />
              <Icon name={layer.icon} className="ml-[28px] size-[14px] text-[#b4b4b4]" />
              <span className={`pl-[11px] ${layer.selected ? 'text-[#7c7c7c]' : ''}`}>{layer.name}</span>
            </li>
          ))}
        </ul>
        <div className="flex h-[18px] items-center justify-end gap-2.5 pr-2">
          <IconButton name="folder" label="New group" iconClass="size-[13px] text-[#b0b0b0]" />
          <IconButton name="sheet" label="New layer" iconClass="size-[11px] text-[#b0b0b0]" />
        </div>
        <div className="flex border-b border-[#181818] pb-2.5 pl-[3px]">
          <div className="flex-1">
            <h2 className="flex h-[27px] items-center">Responsive Design — Position</h2>
            <div className="flex h-[28px] items-center pl-[9px]">
              <label htmlFor="pin-to" className="w-[46px]">Pin To:</label>
              <Dropdown id="pin-to" value="Shape 01" className="h-[18px] w-[144px] text-[#d0d0d0]" />
            </div>
          </div>
          <svg viewBox="0 0 46 46" className="mt-[18px] w-[46px] bg-[#1a1a1a]" aria-hidden="true">
            <rect x="16" y="16" width="14" height="14" rx="2" fill="none" stroke="#777" strokeWidth="1.500" />
            <path d="M15 4h16M15 42h16M3 15v16M43 15v16" stroke="#3b82cf" strokeWidth="2.500" />
            <path d="M23 4v6M23 42v-6M3 23h7M43 23h-7" stroke="#3b82cf" strokeWidth="1.500" />
          </svg>
        </div>
        <div className="border-b border-[#181818] pb-1 pl-[3px] pt-1.5">
          <h2 className="flex h-[28px] items-center">Align and Transform</h2>
          <div className="flex h-6 items-center pl-3">
            <span className="w-[38px]">Align</span>
            {alignments.map((item) => (
              <IconButton key={item.name} name={item.name} label={item.label} className="w-6" iconClass="size-[16px] text-[#b4b4b4]" />
            ))}
          </div>
          <div className="grid h-[114px] grid-cols-[26px_47px_1fr_21px_47px_21px] grid-rows-4 items-center pl-[13px] pt-0.5">
            <Icon name="position" className="size-[14px] text-[#b4b4b4]" />
            <span className={blue}>63.4 ,</span>
            <span className={blue}>182.2</span>
            <Icon name="anchor" className="size-[15px] text-[#a8a8a8]" />
            <span className={blue}>304.4 ,</span>
            <span className={blue}>95.2</span>

            <Icon name="scale" className="size-[14px] text-[#b4b4b4]" />
            <span className={`flex items-center justify-between ${blue}`}>
              100 <Icon name="link" className="size-[14px]" />
            </span>
            <span className="flex gap-[17px] pl-[5px] text-[#4c4c4c]">
              100 <span className="text-[#8a8a8a]">%</span>
            </span>
            <Icon name="rotate" className="size-[15px] text-[#a8a8a8]" />
            <span className={blue}>0</span>
            <span />

            <Icon name="opacity" className="size-[13px] text-[#a8a8a8]" />
            <span className={`whitespace-nowrap ${blue}`}>100.0 %</span>
            <input
              type="range"
              aria-label="Opacity"
              defaultValue={100}
              className="col-span-4 ml-1.5 mr-1 h-3 min-w-0 appearance-none bg-[linear-gradient(#4a4a4a,#4a4a4a)] bg-[length:100%_2px] bg-center bg-no-repeat [&::-webkit-slider-thumb]:size-[10px] [&::-webkit-slider-thumb]:appearance-none [&::-webkit-slider-thumb]:rounded-full [&::-webkit-slider-thumb]:border-2 [&::-webkit-slider-thumb]:border-[#a0a0a0] [&::-webkit-slider-thumb]:bg-[#222]"
            />

            <span>W</span>
            <span className={blue}>59.0</span>
            <div className="col-span-4 flex items-center">
              <span className="w-[23px]">H</span>
              <span className={`w-[40px] ${blue}`}>336.0</span>
              <Icon name="corner" className="size-[14px] text-[#777]" />
              <span className={`pl-4 ${blue}`}>0.0</span>
            </div>
          </div>
        </div>
        <div className="pl-[3px] pr-1.5 pt-1.5">
          <h2 className="flex h-[34px] items-center justify-between">
            Appearance
            <IconButton name="wrench" label="Appearance settings" iconClass="size-[14px] text-[#b4b4b4]" />
          </h2>
          <div className="pl-[6px]">
            <div className="border-b border-[#2c2c2c]">
              <h3 className="flex h-[26px] items-center">Fill</h3>
              <PaintRow id="fill" label="Fill" swatch="bg-[#9e0000]" checked />
            </div>
            <div className="border-b border-[#2c2c2c]">
              <h3 className="flex h-[23px] items-center justify-between">
                Stroke
                <IconButton name="plus" label="Add stroke" iconClass="size-[12px] text-[#b8b8b8]" />
              </h3>
              <PaintRow id="stroke" label="Stroke" swatch="bg-white">
                <span className="ml-7 text-[#484848]">4.0</span>
                <span className="ml-auto flex h-[18px] w-[81px] items-center bg-[#262626] pl-1 text-[#444]">
                  <Icon name="strokeEdge" className="size-[13px] text-[#666]" />
                  <Dropdown id="stroke-position" label="Stroke position" value="Outer" className="h-full flex-1 !bg-transparent" />
                </span>
              </PaintRow>
            </div>
            <div className="border-b border-[#2c2c2c]">
              <h3 className="flex h-[23px] items-center justify-between">
                Shadow
                <IconButton name="plus" label="Add shadow" iconClass="size-[12px] text-[#b8b8b8]" />
              </h3>
              <PaintRow id="shadow" label="Shadow" swatch="bg-[#4a4a4a]" />
            </div>
            <div className="flex h-[26px] items-center gap-1">
              <CheckBox id="mask-with-shape" checked />
              <label htmlFor="mask-with-shape">Mask with Shape</label>
            </div>
          </div>
        </div>
      </div>
      <div className="flex w-3 flex-col items-center bg-[#1b1b1b] pt-[39px]">
        <span className="h-[385px] w-2 rounded-full bg-[#323232]" />
      </div>
    </aside>
  );
}

export default function App() {
  return (
    <div className="relative flex min-h-screen flex-col bg-[#171717] font-['Open_Sans','Noto_Sans',sans-serif] text-[10px] leading-4 text-[#959595]">
      <TitleBar />
      <WorkspaceBar />
      <main className="flex flex-1 gap-1 pb-0.5 pt-px">
        <div className="flex min-w-0 flex-1 flex-col gap-[3px]">
          <div className="flex h-[340px] gap-1">
            <EffectControls />
            <ProgramMonitor />
          </div>
          <div className="flex flex-1 gap-[3px]">
            <ProjectPanel />
            <ToolsPanel />
            <Timeline />
            <AudioMeter />
          </div>
        </div>
        <EssentialGraphics />
      </main>
      <footer className="flex h-[18px] items-center bg-[#252525] pl-px">
        <IconButton name="cloud" label="Creative Cloud" iconClass="size-[17px] text-[#999]" />
      </footer>
      <svg viewBox="0 0 12 18" className="pointer-events-none absolute right-[160px] top-[138px] w-[11px]" aria-hidden="true">
        <path d="M0 0v15l3.500-3 2.500 5.500 2.500-1L6 11.200h5z" fill="#fff" stroke="#222" strokeWidth=".5" />
      </svg>
    </div>
  );
}
